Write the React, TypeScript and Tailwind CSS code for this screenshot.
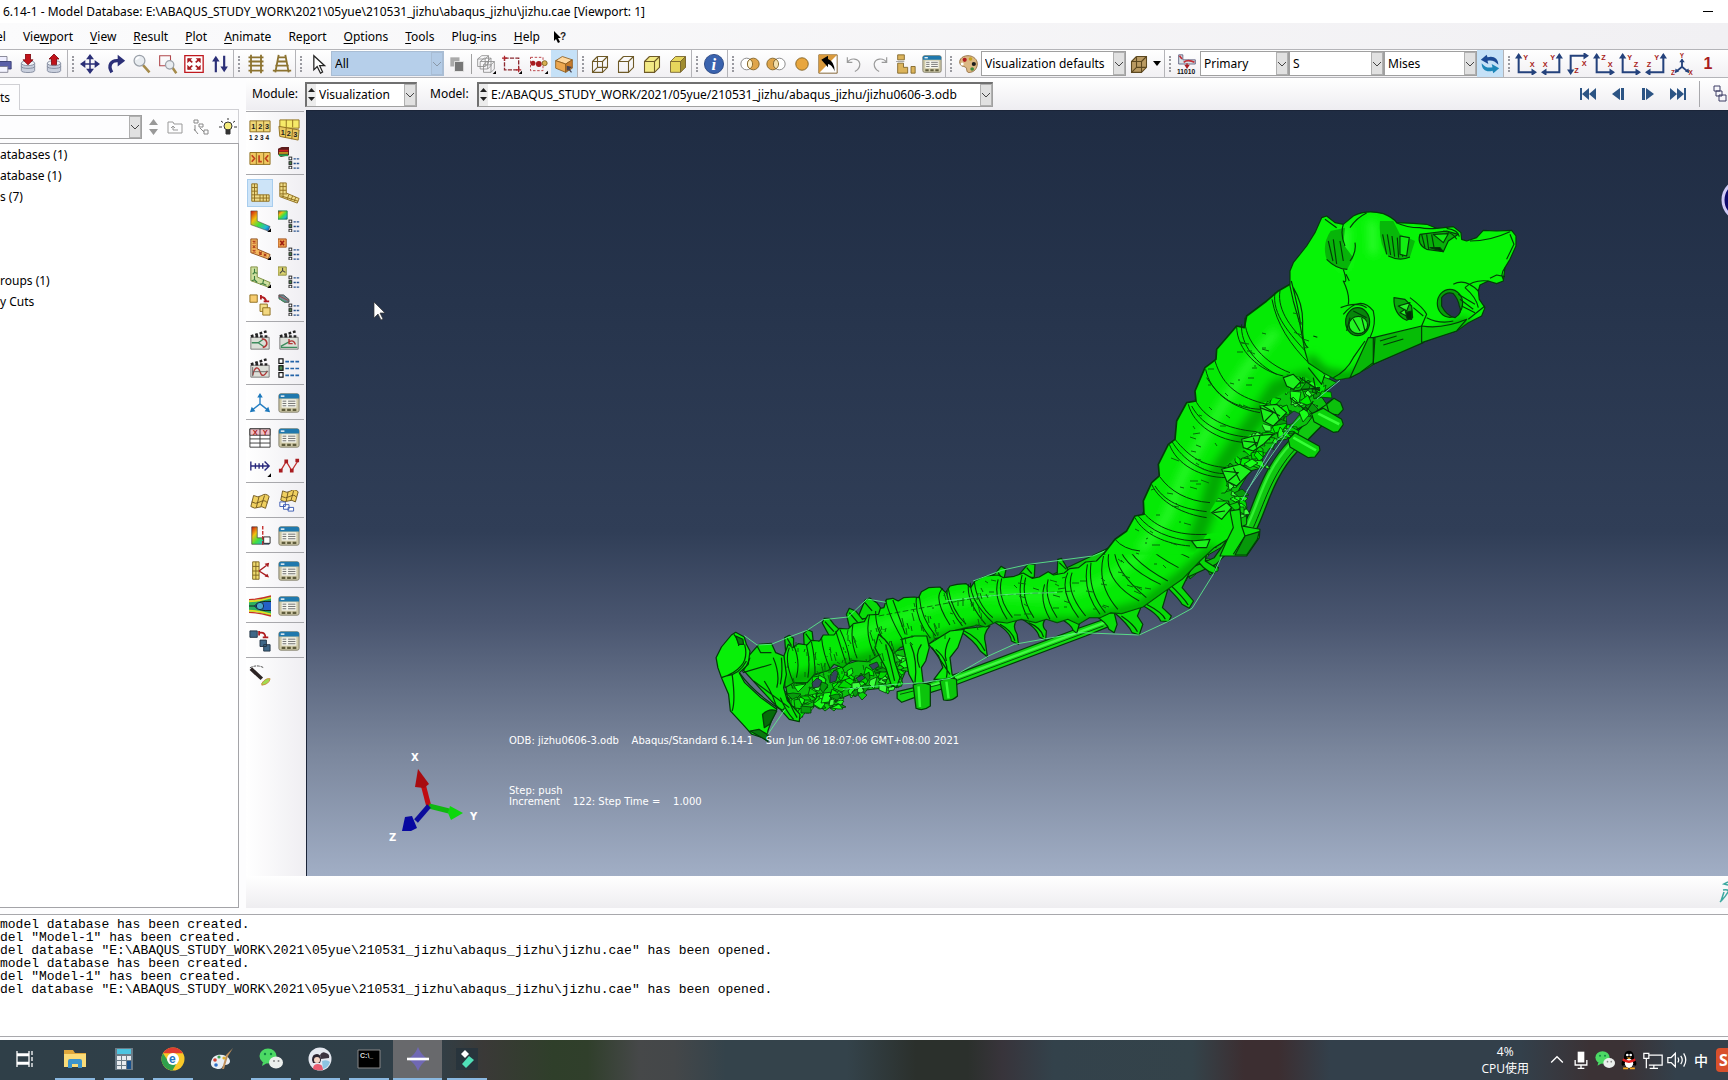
import type { ReactNode } from "react";

const NAVY = "#2b2f77";
const RED = "#a81c20";

function Icon({ children, size = 22 }: { children: ReactNode; size?: number }) {
  return (
    <svg width={size} height={size} viewBox="0 0 24 24" fill="none" className="shrink-0">
      {children}
    </svg>
  );
}

function T({ x, y, s = 8, c = RED, children }: { x: number; y: number; s?: number; c?: string; children: ReactNode }) {
  return (
    <text x={x} y={y} fontSize={s} fontWeight="bold" fill={c} fontFamily="Liberation Sans, sans-serif">
      {children}
    </text>
  );
}

/* ---------- shared icon parts ---------- */

const cubeEdges = "M3 9h12v13H3zM9 3h12v13l-6 6M3 9l6-6M15 9l6-6";

const listRows = (x: number, y: number) => (
  <>
    {[0, 1, 2].map((i) => (
      <g key={i}>
        <rect x={x} y={y + i * 5} width="3" height="3" fill={i === 1 ? "#4f8a4f" : "#fff"} stroke="#222" />
        <path d={`M${x + 5} ${y + 2 + i * 5}h9`} stroke="#24508c" strokeWidth="1.4" strokeDasharray="2.4 1" />
      </g>
    ))}
  </>
);

const clapper = (
  <>
    <path d="M2 9h20v13H2z" fill="#dcdfd8" stroke="#777" />
    <path d="M2 8l19-6M2 8h20" stroke="#222" strokeWidth="2.6" strokeDasharray="3 2" />
  </>
);

const dialogIcon = (
  <>
    <rect x="1" y="2" width="22" height="20" rx="2" fill="#cfc9a8" stroke="#7d7a66" />
    <path d="M1 7V4q0-2 2-2h18q2 0 2 2v3z" fill="#1f78ad" />
    <path d="M3 4.500h4" stroke="#fff" strokeWidth="1.500" />
    <rect x="4" y="8" width="16" height="9" fill="#f6f6ee" />
    <path d="M5 10h4M5 12.500h4M5 15h4M11 10h8M11 12.500h8M11 15h8" stroke="#666" />
    <path d="M4 19.500h4M10 19.500h4M16 19.500h4" stroke="#5f5c3c" strokeWidth="2.500" />
  </>
);

const corner = <path d="M24 20v4h-4z" fill="#000" />;

/* ---------- main toolbar icons ---------- */

const icons: Record<string, ReactNode> = {
  print: (
    <>
      <path d="M5 3h13v6H5z" fill="#eef" stroke="#778" />
      <path d="M1 9h22v9H1z" fill="#5a5fa8" stroke="#33376e" />
      <path d="M5 15h14v7H5z" fill="#f4f4ff" stroke="#778" />
    </>
  ),
  dbDown: (
    <>
      <path d="M4 11v9c0 3 16 3 16 0v-9" fill="#c9cfdd" stroke="#7a8296" />
      <ellipse cx="12" cy="11" rx="8" ry="3" fill="#eef1f6" stroke="#7a8296" />
      <path d="M4 15c0 3 16 3 16 0" stroke="#7a8296" />
      <path d="M9 0h6v7h3l-6 6-6-6h3z" fill="#c2131b" stroke="#7c0a10" />
    </>
  ),
  dbUp: (
    <>
      <path d="M4 11v9c0 3 16 3 16 0v-9" fill="#c9cfdd" stroke="#7a8296" />
      <ellipse cx="12" cy="11" rx="8" ry="3" fill="#eef1f6" stroke="#7a8296" />
      <path d="M4 15c0 3 16 3 16 0" stroke="#7a8296" />
      <path d="M9 13h6V6h3l-6-6-6 6h3z" fill="#c2131b" stroke="#7c0a10" />
    </>
  ),
  move: (
    <path
      d="M12 2v20M2 12h20M9 5.500l3-4 3 4zM9 18.500l3 4 3-4zM5.500 9l-4 3 4 3zM18.500 9l4 3-4 3z"
      stroke={NAVY}
      fill={NAVY}
      strokeWidth="1.800"
    />
  ),
  rotate: (
    <>
      <path d="M7 22C2 14 6 7 15 8" stroke={NAVY} strokeWidth="4" />
      <path d="M14 1l9 7-9 7z" fill={NAVY} />
    </>
  ),
  zoom: (
    <>
      <path d="M13 13l8 9" stroke="#a58a4a" strokeWidth="3" />
      <circle cx="9" cy="8" r="6.500" fill="#e8ecf0" stroke="#9aa0a8" strokeWidth="1.500" />
      <path d="M5 7q1-3 4-3" stroke="#fff" strokeWidth="2" />
    </>
  ),
  zoomBox: (
    <>
      <path d="M2 2h13v12H2z" stroke="#b0484c" strokeWidth="1.300" />
      <path d="M17 16l5 7" stroke="#a58a4a" strokeWidth="3" />
      <circle cx="14" cy="13" r="5" fill="#e8ecf0" stroke="#9aa0a8" strokeWidth="1.500" />
    </>
  ),
  fit: (
    <>
      <path d="M1 2h22v20H1z" fill="#fff" stroke="#c0191f" strokeWidth="1.600" />
      <path d="M4 5h6l-6 6zM20 5h-6l6 6zM4 19h6l-6-6zM20 19h-6l6-6z" fill="#a81c20" />
      <path d="M5 6l5 4M19 6l-5 4M5 18l5-4M19 18l-5-4" stroke="#a81c20" strokeWidth="2" />
    </>
  ),
  cycle: (
    <>
      <path d="M7 22V5M17 2v17" stroke={NAVY} strokeWidth="2.600" />
      <path d="M2.500 9L7 2l4.500 7zM12.500 15l4.500 7 4.500-7z" fill={NAVY} />
    </>
  ),
  ladder: <path d="M6 1v22M18 1v22M3 4h18M3 9h18M3 14h18M3 20h18" stroke="#8c7330" strokeWidth="2.200" />,
  ladderPersp: <path d="M8 1L4 22M16 1l4 21M7 4h10M6 9h12M4 14h16M1 20h22" stroke="#8c7330" strokeWidth="2.200" />,
  cursor: <path d="M7 2v17l4-4 4 8 2.500-1.500-3.500-7.500h6z" fill="#fff" stroke="#222" strokeWidth="1.500" />,
  squares: (
    <>
      <path d="M4 4h11v11H4z" fill="#aaa" />
      <path d="M9 9h11v12H9z" fill="#777" stroke="#eee" />
    </>
  ),
  wireGray: (
    <>
      <path d="M2 6l5-4h8v9l-4 4H2zM2 6h9v9M11 6l4-4M5 9l5-4h8v9l-4 4H5zM5 9h9v9M14 9l4-4M9 13l4-4h9v9l-4 4H9zM9 13h9v9M18 13l4-4" stroke="#8c8c8c" />
      {corner}
    </>
  ),
  selRect: (
    <>
      <path d="M3 5h17v14H3z" stroke="#8c2a30" strokeWidth="1.600" strokeDasharray="5 1.500" />
      <path d="M0 5h6M3 2v6M17 19h6M20 16v6" stroke="#b0262c" strokeWidth="1.500" />
      {corner}
    </>
  ),
  selDots: (
    <>
      <path d="M3 4h15v16H3z" stroke="#b0262c" strokeDasharray="3 2" />
      <circle cx="6" cy="11" r="3" fill="#a81c20" />
      <circle cx="13" cy="12" r="3.500" fill="#a81c20" />
      <circle cx="20" cy="11" r="3" fill="#d8b050" stroke="#7a5c1a" />
      {corner}
    </>
  ),
  orangeBox: (
    <>
      <path d="M2 8l8-5 12 4-8 5z" fill="#ffd9a0" stroke="#8c5a1a" />
      <path d="M2 8l12 4v10L2 17z" fill="#eda850" stroke="#8c5a1a" />
      <path d="M14 12l8-5v10l-8 5z" fill="#c87c2c" stroke="#8c5a1a" />
      <path d="M21 22l-4-5M16 15v4l4-3z" stroke="#445" fill="#445" strokeWidth="1.500" />
    </>
  ),
  cubeWire: <path d={cubeEdges + "M9 3v13h12M3 22l6-6"} stroke="#6e5a28" strokeWidth="1.300" />,
  cubeHidden: <path d={cubeEdges} stroke="#6e5a28" strokeWidth="1.300" />,
  cubeFilled: (
    <>
      <path d="M3 9l6-6h12v13l-6 6H3z" fill="#f3ea86" />
      <path d={cubeEdges} stroke="#6e5a28" strokeWidth="1.300" />
    </>
  ),
  cubeShaded: (
    <>
      <path d="M3 9l6-6h12v13l-6 6H3z" fill="#e6d65c" />
      <path d="M15 9l6-6v13l-6 6z" fill="#a08c30" />
      <path d={cubeEdges} stroke="#6e5a28" />
    </>
  ),
  info: (
    <>
      <circle cx="12" cy="12" r="11.500" fill="#3a63ae" stroke="#23407c" />
      <text x="9" y="19" fontSize="20" fontStyle="italic" fontWeight="bold" fill="#fff" fontFamily="Liberation Serif, serif">
        i
      </text>
    </>
  ),
  unionA: (
    <>
      <circle cx="8" cy="12" r="7" fill="#fff" stroke="#777" />
      <circle cx="16" cy="12" r="7" fill="#dfa54a" stroke="#7a5a1c" />
      <path d="M12 6.200a7 7 0 010 11.600 7 7 0 010-11.600z" fill="#fff2cc" stroke="#7a5a1c" />
    </>
  ),
  unionB: (
    <>
      <circle cx="8" cy="12" r="7" fill="#dfa54a" stroke="#7a5a1c" />
      <circle cx="16" cy="12" r="7" fill="#fff" stroke="#777" />
      <path d="M12 6.200a7 7 0 010 11.600 7 7 0 010-11.600z" fill="#f3e0ae" stroke="#7a5a1c" />
    </>
  ),
  ball: <circle cx="12" cy="12" r="7.500" fill="#e8a63e" stroke="#7a5a1c" />,
  swap: (
    <>
      <path d="M1 1h22v22H1z" fill="#fff" stroke="#6e4c14" />
      <path d="M1 1h22L1 23z" fill="#d99a3c" />
      <path d="M4 7l8-5v4q8 3 8 15-3-8-8-9v4z" fill="#000" />
    </>
  ),
  undo: <path d="M4 4v6h6M4 10c4-6 14-5 15 2 0 4-2 7-6 9" stroke="#9a9a9a" strokeWidth="1.400" />,
  redo: <path d="M20 4v6h-6M20 10C16 4 6 5 5 12c0 4 2 7 6 9" stroke="#9a9a9a" strokeWidth="1.400" />,
  blocks: (
    <>
      <path d="M2 1h8v6H2zM2 11h7v5h5v7H2zM18 15h5v8h-5z" fill="#dcb45c" stroke="#7a5f22" />
      <path d="M0 9h10" stroke="#999" />
    </>
  ),
  dialog: dialogIcon,
  palette: (
    <>
      <path d="M12 2C4 2 0 8 3 13c2 3 6 1 7 4s0 6 5 5c6-1 9-7 8-12S17 2 12 2z" fill="#dcb884" stroke="#8a6434" />
      <circle cx="8" cy="7" r="2.500" fill="#b01c20" />
      <circle cx="15" cy="6" r="2.200" fill="#c8a41c" />
      <circle cx="19" cy="12" r="2.500" fill="#1c1c1c" />
      <circle cx="17" cy="18" r="2.200" fill="#3c8c3c" />
      <circle cx="5" cy="12" r="1.800" fill="#fff" />
    </>
  ),
  cubeTan: (
    <>
      <path d="M3 9l6-6h12v13l-6 6H3z" fill="#b99a62" />
      <path d={cubeEdges + "M9 3v13h12M3 22l6-6"} stroke="#5c4820" strokeWidth="1.300" />
    </>
  ),
  field: (
    <>
      <path d="M2 1h5v6h15v5H2z" fill="#d8e4e8" stroke="#557" />
      <path d="M3 2l3 4M8 10q5-4 13 0" stroke="#c03038" strokeWidth="2" />
      <path d="M12 11v5M10 13.500l2 3 2-3z" stroke={RED} strokeWidth="1.500" />
      <T x={0} y={24} s={8} c="#111">11010</T>
    </>
  ),
  sync: (
    <>
      <path d="M8 1L1 7l9 5-1-4c5-1 9 0 13 5C22 5 16 2 9 4z" fill="#1c4a94" />
      <path d="M16 23l7-6-9-5 1 4c-5 1-9 0-13-5 0 8 6 11 13 9z" fill="#1c86b8" />
    </>
  ),
};

/* ---------- toolbox icons ---------- */

const bigL = "M3 2h6v12h13v7H3z";
const bentL = "M2 1h7v11l14 6-2 5-19-7z";

const toolIcons: Record<string, ReactNode> = {
  frames: (
    <>
      <path d="M1 2h22v12H1z" fill="#f0d878" stroke="#8c6c1c" />
      <path d="M8 2v12M16 2v12" stroke="#8c6c1c" />
      <T x={2.500} y={11} c="#222">1</T>
      <T x={10} y={11} c="#222">2</T>
      <T x={17.500} y={11} c="#222">3</T>
      {[1, 2, 3, 4].map((n) => (
        <T key={n} x={n * 6 - 6} y={23} s={7} c="#111">{n}</T>
      ))}
    </>
  ),
  framesStack: (
    <>
      <path d="M2 1h21v9H2z" fill="#f6ea68" stroke="#8c6c1c" />
      <path d="M9 1v8M16 1v8" stroke="#8c6c1c" />
      <path d="M1 8l22 4-1 11-20-4z" fill="#e8c860" stroke="#8c6c1c" />
      <path d="M9 9.500l-1 11M16 11l-1 11" stroke="#8c6c1c" />
      <T x={3} y={17} c="#222">1</T>
      <T x={9.500} y={18.500} c="#222">2</T>
      <T x={16.500} y={20} c="#222">3</T>
    </>
  ),
  xyFrames: (
    <>
      <path d="M1 6h22v13H1z" fill="#f0c860" stroke="#8c6c1c" />
      <path d="M8 6v13M16 6v13" stroke="#8c6c1c" />
      <path d="M3 9l3 3.500L3 16M11 9v7h3M21 9l-3 3.500 3 3.500" stroke="#c0401c" strokeWidth="1.800" />
    </>
  ),
  contourBar: (
    <>
      <path d="M0 2l4-2h8v9l-9 2-3-3z" fill="#5c1c1c" />
      <path d="M1 4h10" stroke="#c82020" strokeWidth="2" />
      <path d="M1 6.500h10" stroke="#e0c020" strokeWidth="1.500" />
      <path d="M1 9h10" stroke="#20a050" strokeWidth="2" />
      {listRows(12, 11)}
    </>
  ),
  meshL: (
    <>
      <path d={bigL} fill="#efdc88" stroke="#8c6c1c" />
      <path d="M6 2v19M3 6h6M3 10h6M3 14h6M3 17.500h19M12 14v7M15.500 14v7M19 14v7" stroke="#8c6c1c" />
    </>
  ),
  meshBent: (
    <>
      <path d={bentL} fill="#efdc88" stroke="#8c6c1c" />
      <path d="M5.500 1v16M2 5h7M2 9h7M2 13h8M3 15l19 6M12 13.500l-2 5M16 15l-2 5M19.500 16.500l-2 5" stroke="#8c6c1c" />
    </>
  ),
  contour: (
    <>
      <path d={bentL} fill="url(#rainbow)" stroke="#444" strokeWidth=".6" />
      {corner}
    </>
  ),
  contourOpts: (
    <>
      <path d="M0 1h10v9H0z" fill="url(#rainbow)" stroke="#285" />
      {listRows(12, 11)}
    </>
  ),
  symbol: (
    <>
      <path d={bentL} fill="#f3b860" stroke="#8c4c1c" />
      <path d="M4 3l3 3m0-3l-3 3M4 8l3 3m0-3l-3 3M4 13l3 3m0-3l-3 3M11 15l3 3m0-3l-3 3M16 17l3 3m0-3l-3 3" stroke="#b0401c" strokeWidth="1.200" />
      {corner}
    </>
  ),
  symbolOpts: (
    <>
      <path d="M0 1h9v9H0z" fill="#f0a050" stroke="#a0501c" />
      <path d="M2.500 3l4 5m0-5l-4 5" stroke="#a02010" strokeWidth="1.800" />
      {listRows(12, 11)}
    </>
  ),
  orient: (
    <>
      <path d={bentL} fill="#cfe0a0" stroke="#7c8c3c" />
      <path d="M6 3v4L4 9m2-2l3 1M6 11v4l-3 1m3-1l3 3M16 15l-1 4-3 1m3-1l4 2" stroke="#3c7c3c" strokeWidth="1.200" />
      {corner}
    </>
  ),
  orientOpts: (
    <>
      <path d="M0 1h9v9H0z" fill="#d8d070" stroke="#8c8c3c" />
      <path d="M5 2v3L2 8m3-3l3 2" stroke="#444" strokeWidth="1.200" />
      {listRows(12, 11)}
    </>
  ),
  multi: (
    <>
      <path d="M1 1h8v8H1z" fill="#f6cc70" stroke="#8c6c1c" />
      <path d="M12 3q6 0 7 6M13 1v5M16 8h6" stroke="#b01c20" strokeWidth="2" />
      <path d="M12 11h8v8h-8z" fill="#f3e088" stroke="#8c6c1c" />
      <path d="M15 15h8v8h-8z" fill="#f3d880" stroke="#8c6c1c" />
    </>
  ),
  multiOpts: (
    <>
      <path d="M1 1h5l6 5v3H7L1 5z" fill="#6c8c94" stroke="#444" />
      <path d="M1 2l10 5" stroke="#a04040" />
      <path d="M1 5l7 4" stroke="#3c9c5c" />
      {listRows(12, 11)}
    </>
  ),
  animScale: (
    <>
      {clapper}
      <path d="M3 15h7l6-4M10 15l6 4" stroke="#3c8c5c" strokeWidth="1.400" />
      <path d="M14 11c6-1 8 8 1 9" stroke="#b03838" strokeWidth="1.800" />
    </>
  ),
  animTime: (
    <>
      {clapper}
      <path d="M3 20h18M3 19l9-5" stroke="#3c8c5c" strokeWidth="1.400" />
      <path d="M12 14q5-3 7 3M12 11v5h4" stroke="#b03838" strokeWidth="1.500" />
    </>
  ),
  animHarm: (
    <>
      {clapper}
      <path d="M4 20c2-10 6-10 8-4s5 5 8-1" stroke="#b03838" strokeWidth="1.500" />
      <path d="M4 11v10M4 16h17" stroke="#666" />
    </>
  ),
  animOpts: (
    <>
      {[2, 9.500, 17].map((y, i) => (
        <g key={y}>
          <rect x="1" y={y} width="4.500" height="5" fill={i === 1 ? "#4f8a4f" : "#fff"} stroke="#111" strokeWidth="1.300" />
          <path d={`M8 ${y + 3}h15`} stroke="#2464a8" strokeWidth="1.800" strokeDasharray="4 1.500" />
        </g>
      ))}
    </>
  ),
  csys: (
    <>
      <path d="M12 13V3M12 13l-9 7M12 13l9 7" stroke="#2880c4" strokeWidth="1.500" />
      <path d="M9 6l3-5 3 5zM1 22l2-6 4 5zM23 22l-2-6-4 5z" fill="#1c78bc" />
    </>
  ),
  dialog: dialogIcon,
  xyTable: (
    <>
      <path d="M1 2h22v20H1z" fill="#fff" stroke="#333" />
      <path d="M1 2h22v7H1z" fill="#f0c0c8" stroke="#333" />
      <path d="M12 2v20M1 13h22M1 17.500h22" stroke="#333" />
      <T x={4} y={8.500} s={8}>X</T>
      <T x={15} y={8.500} s={8}>Y</T>
    </>
  ),
  path: (
    <>
      <path d="M2 7v10M2 12h19M7 9v6M11 9v6M15 9v6M17 7l5 5-5 5" stroke="#28287c" strokeWidth="1.500" />
      {corner}
    </>
  ),
  zigzag: (
    <>
      <path d="M3 17L9 7l6 10 7-11" stroke="#c03030" strokeWidth="1.400" />
      <path d="M1 15h4v4H1zM7 5h4v4H7zM13 15h4v4h-4zM19 4h4v4h-4z" fill="#a81c20" />
    </>
  ),
  flag: (
    <>
      <path d="M5 6q5 3 9 0t8 1l-4 13q-4-3-8-1t-8-1z" fill="#f0d060" stroke="#6c541c" />
      <path d="M11 7L8 19M17 6l-4 12M3 13q4 3 9 0t8 1" stroke="#6c541c" />
    </>
  ),
  flagStack: (
    <>
      <path d="M5 1q5 3 9 0t8 1l-3 11q-4-3-8-1t-8-1z" fill="#f0d060" stroke="#6c541c" />
      <path d="M11 2L9 12M17 1l-3 11M4 7q4 3 9 0t7 1" stroke="#6c541c" />
      <path d="M2 13h6v5H2zM6 16h6v5H6zM11 19h6v4h-6z" fill="#fff" stroke="#3858b0" />
    </>
  ),
  viewCut: (
    <>
      <path d={bigL} fill="url(#rainbow)" stroke="#333" strokeWidth=".7" />
      <path d="M16 13h7v7h-7z" fill="#fff" stroke="#222" />
      <path d="M15 1v22" stroke="#c02020" strokeWidth="1.400" strokeDasharray="4 1.500" />
    </>
  ),
  freeBody: (
    <>
      <path d="M4 2h7v19H4zM7.500 2v19M4 7h7M4 12h7M4 16.500h7" fill="#f0dc70" stroke="#7c6420" />
      <path d="M11 12l8-6M11 12l8 5" stroke="#a81c20" strokeWidth="1.500" />
      <path d="M22 3l-1 5-4-4zM22 19l-5-1 3-3z" fill="#a81c20" />
    </>
  ),
  stream: (
    <>
      <path d="M0 6q10 0 24-5v22q-14-5-24-5z" fill="#2cb060" />
      <path d="M5 12q8-5 19-5v10q-11 0-19-5z" fill="#2460c8" />
      <path d="M0 5q10 0 24-4M0 19q10 0 24 4" stroke="#c83020" strokeWidth="1.500" />
      <path d="M0 7q10 0 24-4M0 17q10 0 24 4" stroke="#e8e020" strokeWidth="1.800" />
      <path d="M0 12h6M6 12q4-6 18-5M6 12q4 6 18 5" stroke="#111" />
      <circle cx="12" cy="12" r="4" fill="#48a8c8" stroke="#124" />
    </>
  ),
  overlay: (
    <>
      <path d="M1 1h8v7H1z" fill="#406888" stroke="#234" />
      <path d="M12 3q6-1 6 6M11 1v5M15 8h6" stroke="#b01c20" strokeWidth="2" />
      <path d="M12 11h7v7h-7zM16 16h7v7h-7z" fill="#406888" stroke="#234" />
    </>
  ),
  probe: (
    <>
      <path d="M1 3q8-4 15 0" stroke="#444" strokeDasharray="3 1" />
      <path d="M2 4l12 11" stroke="#2c2424" strokeWidth="4" />
      <path d="M14 20q4-6 9-5-1 6-9 7z" fill="#a0dc50" stroke="#c88c3c" />
    </>
  ),
};

const axisViews = [
  { d: "M4 2v19h17", arrows: "M0 6l4-6 4 6zM18 17l6 4-6 4z", a: ["Y", 9, 8], b: ["X", 16, 15] },
  { d: "M20 2v19H3", arrows: "M16 6l4-6 4 6zM6 17l-6 4 6 4z", a: ["Y", 10, 8], b: ["X", 2, 15] },
  { d: "M4 21V3h17", arrows: "M0 18l4 6 4-6zM18-1l6 4-6 4z", a: ["X", 16, 14], b: ["Z", 8, 22] },
  { d: "M4 2v19h17", arrows: "M0 6l4-6 4 6zM18 17l6 4-6 4z", a: ["Z", 9, 8], b: ["X", 16, 15] },
  { d: "M4 2v19h17", arrows: "M0 6l4-6 4 6zM18 17l6 4-6 4z", a: ["Y", 9, 8], b: ["Z", 16, 15] },
  { d: "M20 2v19H3", arrows: "M16 6l4-6 4 6zM6 17l-6 4 6 4z", a: ["Y", 10, 8], b: ["Z", 2, 15] },
];

const toolbox: string[][] = [
  ["frames", "framesStack", "xyFrames", "contourBar"],
  ["meshL", "meshBent", "contour", "contourOpts", "symbol", "symbolOpts", "orient", "orientOpts", "multi", "multiOpts"],
  ["animScale", "animTime", "animHarm", "animOpts"],
  ["csys", "dialog"],
  ["xyTable", "dialog", "path", "zigzag"],
  ["flag", "flagStack"],
  ["viewCut", "dialog"],
  ["freeBody", "dialog"],
  ["stream", "dialog"],
  ["overlay", "dialog"],
  ["probe"],
];

/* ---------- small controls ---------- */

function ToolButton({ name, active }: { name: string; active?: boolean }) {
  return (
    <button
      type="button"
      aria-label={name}
      className={
        active
          ? "flex h-7 w-[26px] shrink-0 items-center justify-center bg-[#c5e1f7]"
          : "flex h-7 w-[26px] shrink-0 items-center justify-center"
      }
    >
      <Icon size={20}>{icons[name]}</Icon>
    </button>
  );
}

function Group({ children, grip = true }: { children: ReactNode; grip?: boolean }) {
  return (
    <div className="flex h-7 shrink-0 items-center border-r border-[#b4b4b8]">
      {grip && <div className="ml-1 mr-[3px] h-4 border-l-2 border-dotted border-[#9a9aa0]" />}
      {children}
    </div>
  );
}

function Chevron({ dim }: { dim?: boolean }) {
  return (
    <span
      className={
        dim
          ? "pointer-events-none flex w-3 items-center justify-center border border-[#a9bdd4] bg-[#b3cbe6]"
          : "pointer-events-none flex w-3 items-center justify-center border border-[#b0b0b0] bg-[#e1e1e1]"
      }
    >
      <svg width="8" height="6" viewBox="0 0 8 6" fill="none">
        <path d="M0 1l4 4 4-4" stroke={dim ? "#8a98a8" : "#444"} />
      </svg>
    </span>
  );
}

function Combo({ label, value, width, spin, dim }: { label: string; value: string; width: string; spin?: boolean; dim?: boolean }) {
  return (
    <div
      className={`flex h-[25px] shrink-0 items-stretch border ${width} ${
        dim ? "border-[#a9bdd4] bg-[#b6cfea]" : "border-[#a0a0a0] bg-white"
      } ${spin ? "border-t-2 border-l-2 border-t-[#707070] border-l-[#707070]" : ""}`}
    >
      {spin && (
        <svg width="9" height="22" viewBox="0 0 9 22" className="shrink-0 bg-[#ececec]">
          <path d="M1 8l3.500-4L8 8zM1 13l3.500 4L8 13z" fill="#222" />
        </svg>
      )}
      <select
        aria-label={label}
        defaultValue={value}
        className="min-w-0 flex-1 appearance-none bg-transparent pl-[3px] outline-none"
      >
        <option>{value}</option>
      </select>
      <Chevron dim={dim} />
    </div>
  );
}

/* ---------- spine model ---------- */

const EDGE = "#033c08";

// small seeded generator so the mesh facets are the same on every render
function seeded(seed: number) {
  let s = seed;
  return () => {
    s = (s * 16807) % 2147483647;
    return s / 2147483647;
  };
}

const clusters = [
  [1313, 352, 8], [1322, 368, 8], [1310, 376, 10], [1320, 390, 9], [1292, 380, 10], [1300, 396, 10], [1308, 408, 10],
  [1271, 409, 11], [1284, 416, 10], [1276, 433, 11], [1292, 428, 8], [1250, 440, 11], [1262, 437, 9], [1258, 456, 10],
  [1232, 470, 11], [1243, 465, 9], [1228, 484, 8], [1238, 497, 9], [1219, 509, 11], [1240, 511, 8], [1226, 522, 9],
  [1195, 543, 10], [1208, 540, 9], [1202, 558, 10], [1212, 566, 6], [1176, 575, 10], [1190, 568, 9],
  [796, 682, 8], [790, 700, 9], [803, 706, 9], [812, 694, 9], [825, 699, 10], [820, 684, 8], [843, 690, 10],
  [844, 674, 9], [836, 702, 7], [864, 679, 10], [858, 688, 8], [882, 672, 10], [886, 682, 8], [897, 678, 9], [905, 663, 8],
];

const shades = ["#00ee00", "#19ff19", "#0ad20a", "#00d800", "#3dff3d", "#089c0c"];

function facets() {
  const rnd = seeded(42);
  const out: { points: string; fill: string }[] = [];
  clusters.forEach(([x, y, r]) => {
    for (let k = 0; k < 8; k++) {
      const pts: string[] = [];
      const a0 = rnd() * 6.28;
      const cx = x + (rnd() - 0.5) * r * 1.5;
      const cy = y + (rnd() - 0.5) * r * 1.5;
      for (let j = 0; j < 4; j++) {
        const a = a0 + j * 1.57 + rnd();
        const d = r * (0.25 + rnd() * 0.75);
        pts.push(`${Math.round(cx + Math.cos(a) * d)},${Math.round(cy + Math.sin(a) * d * 0.8)}`);
      }
      out.push({ points: pts.join(" "), fill: shades[Math.floor(rnd() * shades.length)] });
    }
  });
  return out;
}

// short surface creases scattered along the column
function creases() {
  const rnd = seeded(7);
  const line = [
    [1280, 330], [1240, 350], [1222, 388], [1205, 425], [1180, 465], [1165, 505], [1145, 545], [1120, 575], [1080, 592],
    [1040, 598], [1000, 598], [960, 605], [925, 620], [890, 635], [860, 645], [830, 655], [805, 660],
  ];
  let d = "";
  line.forEach(([x, y], i) => {
    const count = i > 10 ? 20 : 9;
    for (let k = 0; k < count; k++) {
      const px = Math.round(x + (rnd() - 0.4) * 44);
      const py = Math.round(y + (rnd() - 0.5) * 40);
      const dx = i > 10 ? rnd() * 4 - 1 : rnd() * 6 + 2;
      const dy = i > 10 ? rnd() * 8 + 1 : (rnd() - 0.2) * 4;
      d += `M${px} ${py}l${Math.round(dx)} ${Math.round(dy)}`;
    }
  });
  return d;
}

const columnLower =
  "M1250 0L1240 40 1222 52 1213 72 1195 105 1172 108 1163 130 1145 155 1128 160 1110 180 1080 183 1060 200 1035 203 1020 216 990 222 975 212 950 228 930 232 905 216 880 226 850 230 835 222 800 225 785 232 770 240 758 260 745 248 720 250 700 255 688 275 672 258 640 260 620 272 612 290 600 288 570 290 555 300 540 292 522 295 515 320 505 322 500 340 470 342 460 362 430 368 415 384 390 382 375 402 345 402 335 420 312 418 300 432 275 428 260 440 247 430 235 465 238 560 262 545 300 545 320 520 360 508 375 490 400 500 425 478 470 482 500 462 530 470 560 440 600 425 640 430 660 412 700 405 715 388 745 380 780 372 800 378 830 362 860 366 900 355 940 365 970 355 1000 365 1030 355 1060 370 1090 350 1120 350 1150 335 1180 338 1240 318 1300 272 1350 235 1400 180 1440 140 1500 100 1480 0z";

const columnUpper =
  "M690 280L655 300 620 330 560 375 553 410 530 405 470 475 468 505 435 530 405 600 408 630 380 635 350 690 345 745 325 760 295 820 298 855 275 875 250 930 252 970 225 975 200 1020 165 1045 130 1090 400 1090 440 1030 500 1020 450 960 500 880 490 830 550 780 560 740 610 700 600 640 690 600 680 550 740 560 790 600 790 540 745 480z";

// posterior elements that sit behind the bodies
const posteriorUpper =
  "M740 500L800 560 830 575 780 610 800 640 770 660 740 700 700 720 680 745 650 750 630 790 610 830 570 840 540 890 520 930 560 950 560 1000 520 1020 500 1060 430 1100 380 1040 480 900 480 830 550 760 600 640 680 560z";

const posteriorLower =
  "M235 520L300 530 380 500 500 460 590 440 580 500 560 550 520 560 440 570 400 590 330 610 280 635 250 620z";

const sacrum =
  "M690 240L700 215 740 165 765 125 785 80 800 75 825 95 850 100 880 75Q920 55 970 68Q1000 80 1010 95L1060 97 1100 100 1130 112 1180 107 1203 125 1205 145 1220 150 1250 140 1270 118 1310 120 1355 118 1368 135 1368 165 1350 205 1335 230 1330 270 1310 278 1285 270 1260 282 1255 300 1258 325 1275 350 1265 375 1225 395 1190 420 1140 435 1085 455 1040 475 940 520 925 530 870 560 830 567 790 545 745 515 735 480 720 400 700 330 690 285z";

const lowerBands =
  "M250 440Q235 480 262 545M262 432Q282 480 270 530M298 432Q310 480 302 530M312 422Q322 470 322 520M340 408Q345 460 365 505M380 390Q395 440 410 490M392 386Q412 430 420 480M428 372Q420 420 440 472M475 342Q460 400 490 465M492 330Q490 400 540 450M520 297Q530 350 575 430M540 297Q555 340 575 400M606 290Q600 350 645 412M614 285Q618 350 660 405M680 262Q650 290 700 372M690 275Q700 330 735 375M695 262Q705 330 745 370M752 250Q745 300 800 370M757 245Q757 300 820 365M768 240Q775 310 820 350M835 235Q820 290 860 355M845 232Q830 290 875 350M902 222Q885 290 920 355M912 230Q897 290 935 350M965 250Q950 300 980 355M975 235Q962 290 1000 350M1030 215Q1005 270 1060 350M1042 215Q1022 270 1080 345M1085 190Q1070 270 1120 340M1095 185Q1085 270 1135 335M1130 165Q1110 250 1170 325M1145 155Q1130 240 1230 300M1160 140Q1160 210 1250 290M1170 110Q1170 190 1290 250M1190 105Q1190 170 1310 240M1215 60Q1215 130 1340 200M1240 40Q1240 110 1370 170M1250 60Q1270 110 1410 105";

const upperBands =
  "M645 305C635 370 690 430 745 490M660 300C650 360 700 420 745 460M636 325C650 400 690 460 750 520M555 380C550 450 620 520 690 545M530 405C530 480 600 540 670 555M545 400C540 460 590 520 650 550M465 510C490 590 540 620 620 640M437 535C450 600 510 650 600 665M440 560C480 620 520 650 600 655M405 625C430 680 500 715 590 722M385 640C400 700 470 750 560 755M395 645C430 710 500 735 580 740M345 745C390 800 430 825 500 830M328 760C350 820 420 860 500 860M335 750C370 810 430 845 490 848M300 858C330 900 380 930 450 935M275 880C300 935 370 970 440 980M285 885C320 940 380 955 440 962M250 965C290 1010 350 1035 440 1030M225 980C250 1030 320 1060 390 1065M235 975C270 1020 330 1045 400 1050M165 1045Q190 1075 240 1080";

function SpineModel() {
  return (
    <svg width="1421" height="766" viewBox="307 110 1421 766" className="absolute left-0 top-0" aria-label="Spine model">
      <defs>
        <filter id="soft">
          <feGaussianBlur stdDeviation="14" />
        </filter>
        <clipPath id="clipUpper">
          <path d={columnUpper} />
        </clipPath>
        <clipPath id="clipLower">
          <path d={columnLower} />
        </clipPath>
        <clipPath id="clipSacrum">
          <path d={sacrum} />
        </clipPath>
      </defs>

      {/* posterior arches first, the bodies cover their front */}
      <g transform="translate(700 500) scale(.3571 .3333)" stroke={EDGE} strokeWidth="3">
        <path d={posteriorLower} fill="#0ac20c" />
      </g>
      <g transform="translate(1060 190) scale(.3333)" stroke={EDGE} strokeWidth="3">
        <path d="M570 1010C605 940 620 850 700 765C740 720 790 670 830 640" fill="none" strokeWidth="44" />
        <path d="M570 1010C605 940 620 850 700 765C740 720 790 670 830 640" fill="none" stroke="#10c810" strokeWidth="36" />
        <path d="M562 1004C600 930 610 845 694 757" fill="none" stroke="#32f032" strokeWidth="7" />
        <path d="M580 1010C612 940 635 850 705 775" fill="none" />
        <path d={posteriorUpper} fill="#0ac20c" />
      </g>
      {facets().map((f, i) => (
        <polygon key={i} points={f.points} fill={f.fill} stroke={EDGE} strokeWidth=".8" />
      ))}
      <path
        d="M812 682l5-5 5 3-3 6-6 1zM830 674l5-5 3 2-2 9-6 2zM856 677l6-3 3 3-6 4zM869 664l8-3 2 4-6 4zM1286 416l8-6 6 3-8 10-5 1zM1206 505l6 2 1 5-5-2zM1262 458l8-11 5 2-10 18zM1186 541l5-2 1 4-4 2z"
        fill="#37445e"
        stroke={EDGE}
        strokeWidth=".8"
      />

      {/* lower rod, wires, thoracic and cervical column */}
      <g transform="translate(700 500) scale(.3571 .3333)" stroke={EDGE} strokeWidth="3.500" strokeLinejoin="round">
        <path d="M960 235L1145 140 1160 165 980 250z" fill="#0fc80f" />
        <path d="M552 572L600 560 720 518 1060 382 1150 348 1165 368 1080 405 720 550 600 590 565 604 552 592z" fill="#12d812" />
        <path d="M600 570L720 529 1140 362" stroke="#44f844" strokeWidth="7" fill="none" />
        <path d="M560 580L720 538 1130 375" fill="none" strokeWidth="2.500" />
        <path d="M1290 240L1440 170 1480 110 1500 130 1445 190 1300 260z" fill="#0cc00c" />
        <g fill="#08dc08">
          <path d="M720 385Q770 420 785 450L805 468 800 430Q790 400 812 375z" />
          <path d="M815 358Q870 390 872 420L892 430 888 400Q870 370 895 350z" />
          <path d="M895 350Q945 380 950 408L968 417 970 390Q950 370 975 345z" />
          <path d="M1005 350Q1040 370 1045 388L1055 397 1062 370 1060 350z" />
          <path d="M1100 340Q1140 365 1145 385L1160 395 1168 370 1160 335z" />
          <path d="M1155 330Q1200 370 1210 395L1230 402 1240 370 1225 345 1240 305z" />
          <path d="M1225 305Q1280 335 1290 360L1312 362 1320 345 1295 320 1310 265z" />
          <path d="M1285 235Q1340 290 1350 310L1370 322 1382 300 1350 260 1375 205z" />
          <path d="M1380 160Q1410 210 1440 218L1445 200 1415 180 1420 140z" />
          <path d="M800 230L825 220 843 196 857 205 850 240z" />
          <path d="M890 225L918 190 938 190 936 230z" />
          <path d="M1000 225L1002 175 1012 172 1022 190 1035 215z" />
          <path d="M440 355L462 298 475 291 495 305 512 330 500 350z" />
          <path d="M420 385L410 340 418 322 436 330 455 355 470 350 450 385z" />
          <path d="M365 410L342 365 348 352 362 352 375 370 400 395z" />
          <path d="M292 440L290 398 302 386 314 392 318 430z" />
          <path d="M240 455L237 410 250 403 262 412 262 445z" />
        </g>
        <path
          d="M740 390Q780 410 798 450M840 370Q875 390 882 420M920 365Q955 380 962 408M1180 345Q1215 370 1225 392M1250 310Q1295 335 1303 355M1310 245Q1355 290 1367 312M835 215l12 20M915 200l14 18M1006 185l20 20M462 305l20 25M418 335l24 30M350 362l25 30M296 398l15 22M244 412l12 22"
          fill="none"
        />
        <path d={columnLower} fill="#05ea05" />
        <g clipPath="url(#clipLower)" filter="url(#soft)" fill="none" strokeWidth="30">
          <path d="M240 545L440 480 640 425 800 370 1060 365 1240 315 1350 225 1440 140" stroke="#068a06" opacity=".8" />
          <path d="M400 410L520 370 660 310 800 280 1000 290 1130 240 1230 170 1290 60" stroke="#35ff35" strokeWidth="20" opacity=".7" />
        </g>
        <path d={lowerBands} fill="none" strokeWidth="3" />
        <path d="M500 345L800 285 1050 270" fill="none" strokeWidth="2" strokeDasharray="16 7" />
        {/* lumbar legs hanging towards the rod */}
        <path d="M500 400Q540 430 545 480L560 530 550 560 535 550 520 500 490 440z" fill="#08e008" />
        <path d="M565 415L600 405 635 405 642 440 632 480 620 500 625 545 600 550 585 520 578 480z" fill="#0bea0b" />
        <path d="M640 430L700 390 740 385 722 440 700 470 706 520 715 535 655 535 680 500 668 465z" fill="#0bea0b" />
        <path d="M590 430Q610 480 602 545M620 430Q600 460 615 500M660 445Q700 480 690 530M700 410Q680 450 690 480M650 440L700 520M520 430Q530 470 545 540" fill="none" />
        <path d="M597 552Q620 540 645 552L645 615Q625 632 605 622z" fill="#0cc40c" />
        <path d="M672 540Q695 525 718 535L721 585Q705 602 682 597z" fill="#0cc40c" />
        <path d="M612 556L616 618M690 542L696 592" stroke="#3f3" strokeWidth="7" />
        {/* atlas and axis */}
        <path d="M115 500L140 460 165 430 200 427 212 455 235 465 242 520 234 560 245 600 280 640 278 662 250 655 225 625 200 600z" fill="#06e406" />
        <path d="M45 470L60 438 88 402 100 394 124 408 130 430 140 450 135 490 110 515 125 545 170 590 215 625 200 660 190 690 190 722 175 710 145 700 120 670 85 630 80 580 60 530 50 500z" fill="#08f008" />
        <path d="M60 530Q95 520 115 495T125 430M75 525Q110 520 130 480M90 520Q100 600 90 630M110 515Q140 560 190 600T235 620M160 435L170 455 200 455M95 400Q110 420 108 435M150 540Q200 580 250 620M180 540Q210 590 215 625M205 470Q225 520 215 560M120 515L200 490M140 470Q130 500 118 512M228 470Q232 520 225 550M240 570Q250 610 272 650M225 590Q240 630 262 655" fill="none" />
        <path d="M175 640Q195 620 215 630L195 670 180 680z" fill="#056b08" />
        <path d="M100 405L120 415 122 430 108 430zM140 690L165 685 188 700 190 720z" fill="#087a0c" />
        <g fill="none" stroke="#5cf08c" strokeWidth="2.500">
          <path d="M124 404L160 432 200 430 245 410 300 388 345 356 415 348 468 294 520 304" />
          <path d="M765 240L845 208 920 190 1008 178 1100 165 1145 145" />
          <path d="M190 700L238 625M400 565L545 550 625 545 700 532 808 465 880 430 1065 395 1230 402 1310 362 1378 322 1440 215 1470 145" />
          <path d="M690 300Q850 275 1000 275" />
        </g>
      </g>

      {/* upper screws, lumbar column, sacrum */}
      <g transform="translate(1060 190) scale(.3333)" stroke={EDGE} strokeWidth="3.500" strokeLinejoin="round">
        <path d="M800 640L822 622 842 634 850 655 835 672 808 668z" fill="#0cc00c" />
        <path d="M755 668L790 652 845 685 850 700 835 722 820 724 762 692z" fill="#0ad00a" />
        <path d="M685 745L705 725 778 766 780 778 765 798 745 800 690 768z" fill="#0ad00a" />
        <path d="M775 668L838 700M700 740L768 778" stroke="#35ff35" strokeWidth="8" />
        <path d="M510 960L540 955 545 1005 600 1015 598 1040 560 1095 480 1095 500 1050 520 1010z" fill="#0be00b" />
        <path d="M545 1005L555 1035 598 1025M555 1035L520 1090" fill="none" />
        <path d="M555 1035L598 1022 592 1045 560 1092 525 1092z" fill="#07980a" />
        <path d={columnUpper} fill="#05ea05" stroke="none" />
        <g clipPath="url(#clipUpper)" filter="url(#soft)" fill="none" strokeWidth="50">
          <path d="M760 560L650 590 590 680 530 760 470 850 440 960 400 1070" stroke="#068a06" opacity=".7" />
          <path d="M650 420L560 530 490 640 430 740 370 850 320 980 240 1080" stroke="#3aff3a" strokeWidth="26" opacity=".7" />
        </g>
        <path
          d="M690 280L655 300 620 330 560 375 553 410 530 405 470 475 468 505 435 530 405 600 408 630 380 635 350 690 345 745 325 760 295 820 298 855 275 875 250 930 252 970 225 975 200 1020 165 1045 130 1090"
          fill="none"
          strokeWidth="5"
        />
        <path d={upperBands} fill="none" strokeWidth="3" />
        {/* transverse processes over the right side of the bodies */}
        <g fill="#1cf21c">
          <path d="M670 560L700 550 722 572 700 595 680 585z" />
          <path d="M600 645L650 640 680 665 640 705 610 690z" />
          <path d="M545 745L580 735 640 730 610 760 580 780 550 770z" />
          <path d="M485 835L540 820 575 840 530 885 500 870z" />
          <path d="M455 965L500 935 515 950 485 985z" />
          <path d="M395 1050L450 1045 440 1070 410 1070z" />
        </g>
        <path d="M600 650l40 15-25 25M610 645l50 30M640 650l20 40M550 750l40 5-30 20M580 740l10 30M600 735l-10 30M490 840l45 5-30 25M520 830l20 40M460 965l35-5M740 490l30 20 20-15M750 470l10 40 30 10M745 530l40 50 10-30M720 560l60 40M700 600l80-10M760 560l10 50M690 620l50 40 20-30" fill="none" />
        <path d={sacrum} fill="#06f406" />
        <g clipPath="url(#clipSacrum)" filter="url(#soft)" fill="none" strokeWidth="26">
          <path d="M745 500L790 545 870 560 940 515 1085 450 1225 390" stroke="#058a05" />
          <path d="M860 110L850 230M935 90L940 190" stroke="#3dff3d" strokeWidth="18" />
        </g>
        <path d="M940 440L1085 405 1090 455 940 520z" fill="#06bc06" />
        <path d="M1085 405Q1150 415 1220 385L1190 420 1085 455z" fill="#08c808" />
        <path d="M925 440L870 560 900 545 940 515 945 440z" fill="#08b808" />
        <path d="M812 120Q785 160 800 205 830 235 862 235L880 200 850 160 855 110z" fill="#07b409" stroke="none" />
        <path d="M960 90Q955 160 985 195 1020 212 1050 198L1065 150 1020 130 1000 90z" fill="#07b809" stroke="none" />
        <path d="M1080 130Q1070 160 1100 175L1150 182 1165 150 1195 130 1160 120z" fill="#08b009" />
        <path d="M968 130l12 60M982 130l10 62M996 135l8 62M1012 140l4 60M1030 145l-2 52M1085 130l10 40M1100 130l6 44M1115 130l8 44M805 150l14 60M820 145l10 74M840 150l10 60M1130 135l20-5M985 195Q1020 212 1050 198M800 205Q830 235 862 235" fill="none" />
        <path d="M1020 135L1048 140 1040 195 1020 190zM1120 130L1165 128 1150 155z" fill="#12ee12" />
        <path d="M1110 170L1150 182 1140 170z" fill="#022c06" />
        <ellipse cx="893" cy="392" rx="36" ry="42" fill="#07860a" />
        <ellipse cx="895" cy="402" rx="28" ry="26" fill="#23f523" />
        <path d="M850 370Q900 310 940 360 950 400 930 440M842 350Q890 330 920 350M880 360l40 20M860 420l10-40M905 380l10 40M880 385l20 35" fill="none" />
        <path d="M1002 320Q1000 370 1040 388L1058 380 1055 345 1035 325z" fill="#08a80a" />
        <path d="M1035 365L1055 360 1055 385 1042 384z" fill="#022c06" />
        <path d="M1015 345l25 15 10-25zM1020 365l15-10 5 20z" fill="#2cf52c" />
        <ellipse cx="1170" cy="337" rx="38" ry="42" fill="#07a009" />
        <path d="M1145 320Q1160 300 1180 308 1195 325 1198 345 1210 365 1185 380 1160 375 1145 345z" fill="#28344f" />
        <path d="M1050 320Q1090 350 1100 370L1085 405M1060 350l30 25M1100 380Q1140 400 1180 390M1195 310l50 30M1200 325l40 30M1205 345l40 20M1215 290Q1250 320 1255 350M1225 385L1275 345M1255 300Q1215 260 1180 280M1285 270Q1240 265 1215 290M1290 262l20-10 25 5M1335 230Q1320 250 1330 265M1350 130L1362 160 1340 205M850 235Q865 280 850 270 870 310 865 340M858 250l10 20M700 290Q730 340 728 400T745 470M694 270Q715 350 722 400M795 85L830 110M850 100Q840 130 855 165M885 155Q890 185 870 210M760 435l12 4M820 560Q860 540 880 500L915 450M940 440V520M960 450l50-15M970 462l60-18M1230 150Q1290 150 1350 122M920 66Q890 80 870 110M1010 95Q1040 110 1080 110 1100 115 1130 112M1150 120q30 5 40 25M1160 112q35 5 38 25" fill="none" />
        <g fill="none" stroke="#63c8a0" strokeWidth="3">
          <path d="M840 568L770 625M720 680L640 760 545 930M700 700L560 900" />
        </g>
      </g>

      <path d={creases()} stroke="#056a0a" fill="none" />

      {/* selection ring cut by the right edge */}
      <circle cx="1743" cy="199" r="20" fill="#0e0a6c" stroke="#cfcaf6" strokeWidth="3" />
      {/* pointer */}
      <path d="M374 301v16l4-4 3 6 2-1-3-6h5z" fill="#fff" stroke="#333" strokeWidth=".7" />
    </svg>
  );
}

function Triad() {
  return (
    <svg width="100" height="100" viewBox="0 0 100 100" className="absolute bottom-[26px] left-[76px]">
      <g fontSize="10" fontWeight="bold" fill="#fff" fontFamily="DejaVu Sans, sans-serif">
        <text x="28" y="11">X</text>
        <text x="87" y="70">Y</text>
        <text x="6" y="91">Z</text>
      </g>
      <path d="M46 57L39 30" stroke="#c00c10" strokeWidth="5" />
      <path d="M35 19l11 15-5 4-9-1z" fill="#a80c10" />
      <path d="M46 56l20 5" stroke="#10b810" strokeWidth="5" />
      <path d="M80 63l-13-7-2 7 3 7z" fill="#0cd80c" />
      <path d="M46 56L33 71" stroke="#0c0c9c" strokeWidth="5" />
      <path d="M19 81l3-14 7-1 5 12-6 3z" fill="#0808a0" />
    </svg>
  );
}

/* ---------- page sections ---------- */

const menus: [string, string, string][] = [
  ["Vie", "w", "port"], ["", "V", "iew"], ["", "R", "esult"], ["", "P", "lot"], ["", "A", "nimate"],
  ["Re", "p", "ort"], ["", "O", "ptions"], ["", "T", "ools"], ["Plu", "g", "-ins"], ["", "H", "elp"],
];

function MenuBar() {
  return (
    <nav className="flex h-[26px] shrink-0 items-center gap-[17px] overflow-hidden bg-gradient-to-r from-[#fbfbfc] to-[#f1f0f3] pt-px text-[12px]">
      <button type="button" className="-ml-1">el</button>
      {menus.map(([a, k, b]) => (
        <button type="button" key={a + k + b} className="shrink-0">
          {a}
          <span className="underline underline-offset-2">{k}</span>
          {b}
        </button>
      ))}
      <button type="button" aria-label="Context help" className="-ml-1">
        <svg width="14" height="14" viewBox="0 0 14 14">
          <path d="M1 1v10l2-2 2 4 2-1-2-4h3z" fill="#000" />
          <T x={7} y={10} s={10} c="#222">?</T>
        </svg>
      </button>
    </nav>
  );
}

function Toolbar() {
  return (
    <div className="flex h-[29px] shrink-0 items-center overflow-hidden border-y border-[#b4b4b8] bg-gradient-to-b from-white to-[#f1f0f3] text-[12px]">
      <div className="-ml-[11px] flex">
        <Group grip={false}>
          <ToolButton name="print" />
          <ToolButton name="dbDown" />
          <ToolButton name="dbUp" />
        </Group>
      </div>
      <Group>
        {["move", "rotate", "zoom", "zoomBox", "fit", "cycle"].map((n) => (
          <ToolButton key={n} name={n} />
        ))}
      </Group>
      <Group>
        <ToolButton name="ladder" />
        <ToolButton name="ladderPersp" />
      </Group>
      <Group>
        <ToolButton name="cursor" />
        <Combo label="Selection filter" value="All" width="w-[113px]" dim />
        <ToolButton name="squares" />
        <div className="mx-px h-5 border-l border-[#a0a0a0]" />
        {["wireGray", "selRect", "selDots"].map((n) => (
          <ToolButton key={n} name={n} />
        ))}
        <ToolButton name="orangeBox" active />
      </Group>
      <Group>
        {["cubeWire", "cubeHidden", "cubeFilled", "cubeShaded"].map((n) => (
          <ToolButton key={n} name={n} />
        ))}
      </Group>
      <Group>
        <ToolButton name="info" />
      </Group>
      <Group>
        {["unionA", "unionB", "ball", "swap", "undo", "redo", "blocks", "dialog"].map((n) => (
          <ToolButton key={n} name={n} />
        ))}
      </Group>
      <Group>
        <ToolButton name="palette" />
        <Combo label="Color code" value="Visualization defaults" width="w-[145px]" />
        <ToolButton name="cubeTan" />
        <svg width="12" height="6" viewBox="0 0 12 6">
          <path d="M1 0h8L5 5z" fill="#000" />
        </svg>
      </Group>
      <Group>
        <ToolButton name="field" />
        <Combo label="Variable type" value="Primary" width="w-[89px]" />
        <Combo label="Output variable" value="S" width="w-[95px]" />
        <Combo label="Invariant" value="Mises" width="w-[93px]" />
        <ToolButton name="sync" active />
      </Group>
      <Group>
        {axisViews.map((v, i) => (
          <button type="button" key={i} aria-label={`View ${v.a[0]}${v.b[0]}`} className="flex w-[26px] shrink-0 justify-center">
            <Icon>
              <path d={v.d} stroke="#24427c" strokeWidth="2.200" />
              <path d={v.arrows} fill="#24427c" />
              <T x={v.a[1] as number} y={v.a[2] as number}>{v.a[0]}</T>
              <T x={v.b[1] as number} y={v.b[2] as number}>{v.b[0]}</T>
            </Icon>
          </button>
        ))}
        <button type="button" aria-label="Isometric view" className="flex w-[26px] shrink-0 justify-center">
          <Icon>
            <path d="M12 15V7M12 15l-6 5M12 15l6 5" stroke="#24427c" strokeWidth="2" />
            <path d="M9 10l3-4 3 4zM4 22l1-5 4 3zM20 22l-1-5-4 3z" fill="#24427c" />
            <T x={9.500} y={5} s={7}>Y</T>
            <T x={0} y={24} s={7}>Z</T>
            <T x={19} y={24} s={7}>X</T>
          </Icon>
        </button>
        <button type="button" className="w-[26px] shrink-0 font-['Liberation_Sans',sans-serif] text-[16px] font-bold text-[#a81c20]">1</button>
        <button type="button" className="w-[26px] shrink-0 font-['Liberation_Sans',sans-serif] text-[16px] font-bold text-[#a81c20]">2</button>
      </Group>
    </div>
  );
}

const tree = ["atabases (1)", "atabase (1)", "s (7)", "", "", "", "roups (1)", "y Cuts"];

function ModelTree() {
  return (
    <aside className="mb-[6px] flex w-[239px] shrink-0 flex-col text-[12px]">
      <div className="flex h-8 items-end">
        <div className="h-[26px] w-5 border-r border-t border-[#d0d0d4] pt-1">ts</div>
        <div className="flex-1 border-b border-[#d0d0d4]" />
      </div>
      <div className="flex h-[33px] items-center border-r border-[#d0d0d4]">
        <div className="flex h-6 w-[142px] border border-l-0 border-[#a0a0a0]">
          <select aria-label="Tree filter" className="flex-1 appearance-none">
            <option></option>
          </select>
          <Chevron />
        </div>
        <svg width="9" height="18" viewBox="0 0 9 18" className="ml-[7px]">
          <path d="M0 7l4.500-6L9 7zM0 11l4.500 6L9 11z" fill="#999" />
        </svg>
        <div className="ml-[9px] flex gap-[10px]">
          <button type="button" aria-label="Parent folder">
            <svg width="16" height="16" viewBox="0 0 16 16" fill="none" stroke="#999">
              <path d="M1 3h5l1 2h8v9H1zM6 11h5M6 11V7M4 9l2-2 2 2" />
            </svg>
          </button>
          <button type="button" aria-label="Link tree">
            <svg width="16" height="16" viewBox="0 0 16 16" fill="none" stroke="#888">
              <path d="M1 1h4v3H1zM6 5h4v3H6zM11 11h4v4h-4zM7 9l4 4M2 6v6M1 10l4 5" />
            </svg>
          </button>
          <button type="button" aria-label="Tip">
            <svg width="18" height="18" viewBox="0 0 18 18" fill="none" stroke="#333">
              <path d="M9 0v2M2 3l2 1.500M16 3l-2 1.500M0 9h3M15 9h3" />
              <circle cx="9" cy="8" r="4" fill="#f4ec7c" />
              <path d="M7 12h4v4H7z" fill="#333" />
            </svg>
          </button>
        </div>
      </div>
      <ul className="flex-1 overflow-hidden border-b border-r border-t border-[#a4a4a8] bg-white">
        {tree.map((t, i) => (
          <li key={i} className="h-[21px] whitespace-nowrap leading-[21px]">
            {t}
          </li>
        ))}
      </ul>
    </aside>
  );
}

function ContextBar() {
  return (
    <div className="flex h-8 shrink-0 items-center overflow-hidden bg-gradient-to-b from-white to-[#eeedf1] pl-[6px] text-[12px]">
      <span className="w-[53px] shrink-0">Module:</span>
      <Combo label="Module" value="Visualization" width="w-[112px]" spin />
      <span className="ml-[13px] w-[47px] shrink-0">Model:</span>
      <Combo
        label="Model"
        value="E:/ABAQUS_STUDY_WORK/2021/05yue/210531_jizhu/abaqus_jizhu/jizhu0606-3.odb"
        width="w-[516px]"
        spin
      />
      <div className="ml-auto flex shrink-0 items-center gap-3">
        {[
          ["First", "M1 3h2v12H1zM10 3v12l-7-6zM17 3v12l-7-6z"],
          ["Previous", "M11 3v12L3 9zM12 3h3v12h-3z"],
          ["Next", "M3 3h3v12H3zM7 3v12l8-6z"],
          ["Last", "M1 3v12l7-6zM8 3v12l7-6zM15 3h2v12h-2z"],
        ].map(([label, d]) => (
          <button type="button" key={label} aria-label={label}>
            <svg width="18" height="18" viewBox="0 0 18 18">
              <path d={d} fill="#2c5484" />
            </svg>
          </button>
        ))}
        <div className="h-[26px] border-l border-[#a8a8ac]" />
        <button type="button" aria-label="Cascade">
          <svg width="16" height="18" viewBox="0 0 16 18" fill="#f6f6fa" stroke="#3c3c64">
            <path d="M2 1h6v5H2zM4 6h6v5H4zM7 10h7v6H7z" />
          </svg>
        </button>
      </div>
    </div>
  );
}

function Toolbox() {
  return (
    <div className="w-[60px] shrink-0 bg-gradient-to-r from-white to-[#efeef2] pr-[2px] pt-px">
      {toolbox.map((group, i) => (
        <div key={i} className="grid grid-cols-2 border-t border-[#a8a8ac] pb-[2px] pt-1">
          {group.map((n, j) => (
            <button
              type="button"
              key={j}
              aria-label={n}
              className={
                n === "meshL"
                  ? "ml-px flex h-7 w-[26px] items-center justify-center border border-[#a8cdee] bg-[#cde4f8]"
                  : "ml-px flex h-7 w-[26px] items-center justify-center"
              }
            >
              <Icon>{toolIcons[n]}</Icon>
            </button>
          ))}
        </div>
      ))}
    </div>
  );
}

function Viewport() {
  return (
    <div className="relative min-w-0 flex-1 overflow-hidden border-l border-t border-[#1a2438] bg-[linear-gradient(180deg,#1f2c43_0%,#26344c_25%,#303e57_55%,#4a5670_67%,#7b879d_84%,#a1aec5_100%)]">
      <SpineModel />
      <Triad />
      <div className="absolute bottom-[69px] left-[202px] whitespace-pre font-['DejaVu_Sans',sans-serif] text-[10px] leading-[11px] text-white">
        <p className="mb-[39px]">ODB: jizhu0606-3.odb    Abaqus/Standard 6.14-1    Sun Jun 06 18:07:06 GMT+08:00 2021</p>
        <p>Step: push</p>
        <p>Increment    122: Step Time =    1.000</p>
      </div>
    </div>
  );
}

const messages = [
  "model database has been created.",
  'del "Model-1" has been created.',
  'del database "E:\\ABAQUS_STUDY_WORK\\2021\\05yue\\210531_jizhu\\abaqus_jizhu\\jizhu.cae" has been opened.',
  "model database has been created.",
  'del "Model-1" has been created.',
  'del database "E:\\ABAQUS_STUDY_WORK\\2021\\05yue\\210531_jizhu\\abaqus_jizhu\\jizhu.cae" has been opened.',
];

/* ---------- taskbar ---------- */

const wechat = (
  <>
    <ellipse cx="9" cy="9" rx="8.500" ry="7.500" fill="#4cd964" />
    <path d="M4 15l-1 4 5-3z" fill="#4cd964" />
    <circle cx="6" cy="7" r="1.200" fill="#184" />
    <circle cx="12" cy="7" r="1.200" fill="#184" />
    <ellipse cx="17" cy="15.500" rx="7" ry="6" fill="#ecefed" />
    <circle cx="15" cy="14" r="1" fill="#888" />
    <circle cx="19.500" cy="14" r="1" fill="#888" />
  </>
);

const apps: { name: string; running?: boolean; active?: boolean; icon: ReactNode }[] = [
  {
    name: "Task view",
    icon: <path d="M3 4v3h12V4M3 20v-3h12v3M3 8.500h12v7H3zM18 4v4M18 10v4M18 16v4" stroke="#fff" strokeWidth="1.300" />,
  },
  {
    name: "Explorer",
    running: true,
    icon: (
      <>
        <path d="M1 3h9l2 3h11v14H1z" fill="#e0a83c" />
        <path d="M1 7h22v13H1z" fill="#fbdc78" />
        <path d="M5 21v-7q0-2 2-2h10q2 0 2 2v7h-4v-4H9v4z" fill="#3c94cc" />
      </>
    ),
  },
  {
    name: "Calculator",
    running: true,
    icon: (
      <>
        <path d="M3 1h18v22H3z" fill="#6c7c88" />
        <path d="M5 2h14v5H5z" fill="#4cc4e0" />
        <path d="M5 9h4v4H5zM10 9h4v4h-4zM15 9h4v4h-4zM5 14h4v4H5zM10 14h4v4h-4zM5 19h4v3H5zM10 19h4v3h-4z" fill="#e8ecf0" />
        <path d="M15 14h4v8h-4z" fill="#18508c" />
      </>
    ),
  },
  {
    name: "Chrome",
    running: true,
    icon: (
      <>
        <circle cx="12" cy="12" r="11.500" fill="#f8c828" />
        <path d="M2 6.300A11.500 11.500 0 0122 6.300H12z" fill="#e03c30" />
        <path d="M2 6.300a11.500 11.500 0 009.500 17.200l5-9L7 14z" fill="#30a04c" />
        <circle cx="12" cy="12" r="6" fill="#fff" />
        <text x="8" y="16" fontSize="12" fontWeight="bold" fill="#2474c0" fontFamily="Liberation Sans, sans-serif">e</text>
      </>
    ),
  },
  {
    name: "Paint",
    icon: (
      <>
        <path d="M1 15C2 8 10 6 16 9s5 9-1 9c-3 0-2 4-6 4S0 20 1 15z" fill="#e8eef4" />
        <path d="M23 1l-5 8-4 13h-2l4-14z" fill="#c0905c" />
        <circle cx="5" cy="13" r="1.800" fill="#d04030" />
        <circle cx="9" cy="10" r="1.600" fill="#40a050" />
        <circle cx="6" cy="18" r="1.800" fill="#3070c8" />
        <circle cx="14" cy="11" r="1.600" fill="#e0b030" />
      </>
    ),
  },
  { name: "WeChat", running: true, icon: wechat },
  {
    name: "Chat",
    running: true,
    icon: (
      <>
        <circle cx="12" cy="12" r="11.500" fill="#e4e8f0" />
        <path d="M4 13q0-6 5-6 4 0 4 6l-1 3H5z" fill="#2c2430" />
        <path d="M12 8q2-4 6-2 4 1 3 5l-8 1z" fill="#3c3440" />
        <circle cx="9" cy="13" r="3" fill="#f4d4c4" />
        <path d="M5 22q0-5 5-5t5 6q-6 1-10-1z" fill="#e85c70" />
        <path d="M14 14q5-2 8 1-2 6-7 7z" fill="#8cc4e0" />
      </>
    ),
  },
  {
    name: "Terminal",
    running: true,
    icon: (
      <>
        <path d="M1 3h22v18H1z" fill="#000" stroke="#888" />
        <T x={3} y={11} s={7} c="#ddd">C:\_</T>
      </>
    ),
  },
  {
    name: "Abaqus",
    running: true,
    active: true,
    icon: (
      <>
        <path d="M12 0q3 8 10 12-7 4-10 12Q9 16 2 12q7-4 10-12z" fill="#7068b4" />
        <path d="M1 12h22" stroke="#fff" strokeWidth="2.600" />
      </>
    ),
  },
  {
    name: "Filmora",
    running: true,
    icon: (
      <>
        <path d="M1 1h22v22H1z" fill="#28343c" />
        <path d="M10 3l4 4-4 4-4-4z" fill="#fff" />
        <path d="M14 9l5 4-8 8-4-4z" fill="#50e0b8" />
      </>
    ),
  },
];

function Taskbar() {
  return (
    <footer className="flex h-10 shrink-0 overflow-hidden bg-[linear-gradient(90deg,#2f3f48_0%,#303f48_25%,#3a3937_28%,#2f3f2a_32%,#303f2b_34%,#464849_37%,#444749_39%,#34434b_42%,#34434b_49%,#2b302c_53%,#2b302c_56%,#38343b_58%,#33424b_61%,#34434a_69%,#3c2e31_72%,#3c2e31_74%,#33404b_77%,#33404b_88%,#3b3235_92%,#3b3235_94%,#33404b_97%)] pl-px text-white">
      {apps.map((a) => (
        <button
          type="button"
          key={a.name}
          aria-label={a.name}
          className={
            a.active
              ? "flex w-[49px] shrink-0 flex-col items-center bg-[#68696c]"
              : "flex w-[49px] shrink-0 flex-col items-center"
          }
        >
          <span className="flex h-[38px] items-center">
            <Icon size={24}>{a.icon}</Icon>
          </span>
          {a.running && <span className={a.active ? "h-[2px] w-full bg-[#8ab8e0]" : "h-[2px] w-10 bg-[#8ab8e0]"} />}
        </button>
      ))}
      <div className="ml-auto flex shrink-0 items-center">
        <div className="mr-[18px] text-center font-['Open_Sans','Noto_Sans_CJK_SC',sans-serif] text-[12px] leading-[17px]">
          <p>4%</p>
          <p>CPU使用</p>
        </div>
        <div className="flex items-center gap-1">
          <Icon size={20}>
            <path d="M5 15l7-7 7 7" stroke="#fff" strokeWidth="1.600" />
          </Icon>
          <Icon size={20}>
            <path d="M8 2h8v13H8z" fill="#fff" />
            <path d="M5 12v6h14v-6M12 18v4M8 22h8" stroke="#fff" strokeWidth="1.600" />
          </Icon>
          <Icon size={20}>{wechat}</Icon>
          <Icon size={20}>
            <path d="M12 1c5 0 6 5 6 9 4 5 3 8 2 9l-3-1q-1 4-5 4t-5-4l-3 1c-1-1-2-4 2-9 0-4 1-9 6-9z" fill="#000" />
            <ellipse cx="12" cy="16" rx="5" ry="5.500" fill="#fff" />
            <path d="M5 10q7 5 14 0l1 3q-8 5-16 0z" fill="#e02020" />
            <circle cx="10" cy="6" r="1.600" fill="#fff" />
            <circle cx="14" cy="6" r="1.600" fill="#fff" />
            <path d="M9 9h6l-3 2zM5 21h6v2H5zM13 21h6v2h-6z" fill="#f8a820" />
          </Icon>
          <Icon size={20}>
            <path d="M7 6h16v12H7M13 18v4M8 22h10M1 4h6v6H1zM4 10v12" stroke="#fff" strokeWidth="1.500" />
          </Icon>
          <Icon size={20}>
            <path d="M1 9h4l5-5v16l-5-5H1zM13 9q2 3 0 6M16.500 7q3.500 5 0 10M20 4q5 8 0 16" stroke="#fff" strokeWidth="1.500" />
          </Icon>
          <span className="w-5 text-center font-['Noto_Sans_CJK_SC',sans-serif] text-[14px] font-medium">中</span>
          <span className="ml-px -mr-[12px] h-6 w-6 rounded bg-[#d8502c] pl-[3px] text-[16px] font-bold leading-6">S</span>
        </div>
      </div>
    </footer>
  );
}

export default function App() {
  return (
    <div className="flex h-screen w-full flex-col overflow-hidden bg-[#fdfdfe] font-['Noto_Sans','Open_Sans',sans-serif] text-black">
      <svg width="0" height="0" className="absolute">
        <linearGradient id="rainbow" x1="0" y1="0" x2="1" y2="1">
          <stop offset="0" stopColor="#d01010" />
          <stop offset=".3" stopColor="#f0c010" />
          <stop offset=".55" stopColor="#40e040" />
          <stop offset=".8" stopColor="#20b8d8" />
          <stop offset="1" stopColor="#1040c0" />
        </linearGradient>
      </svg>

      <header className="flex h-[23px] shrink-0 items-center justify-between bg-white pl-[3px] pr-[15px] text-[12px]">
        <h1>6.14-1 - Model Database: E:\ABAQUS_STUDY_WORK\2021\05yue\210531_jizhu\abaqus_jizhu\jizhu.cae [Viewport: 1]</h1>
        <button type="button" aria-label="Minimize" className="h-px w-[10px] bg-black" />
      </header>
      <MenuBar />
      <Toolbar />

      <main className="flex min-h-0 flex-1">
        <ModelTree />
        <section className="ml-[7px] flex min-w-0 flex-1 flex-col">
          <ContextBar />
          <div className="flex min-h-0 flex-1">
            <Toolbox />
            <Viewport />
          </div>
          <div className="mb-[6px] flex h-8 shrink-0 items-center justify-end overflow-hidden bg-gradient-to-b from-white to-[#eeedf0]">
            <svg width="9" height="24" viewBox="0 0 9 24" fill="none" stroke="#3ca8a0" strokeWidth="1.500">
              <path d="M9 2l-4 2 4 1M4 10q6-1 5 2-2 4-7 9l3-9M1 22l3-3" />
            </svg>
          </div>
        </section>
      </main>

      <section className="mb-[3px] h-[123px] shrink-0 overflow-hidden border-y border-[#a8a8ac] bg-white pt-[3px] font-['Liberation_Mono',monospace] text-[13px] leading-[13px]">
        {messages.map((m, i) => (
          <p key={i} className="whitespace-pre">
            {m}
          </p>
        ))}
      </section>
      <Taskbar />
    </div>
  );
}
